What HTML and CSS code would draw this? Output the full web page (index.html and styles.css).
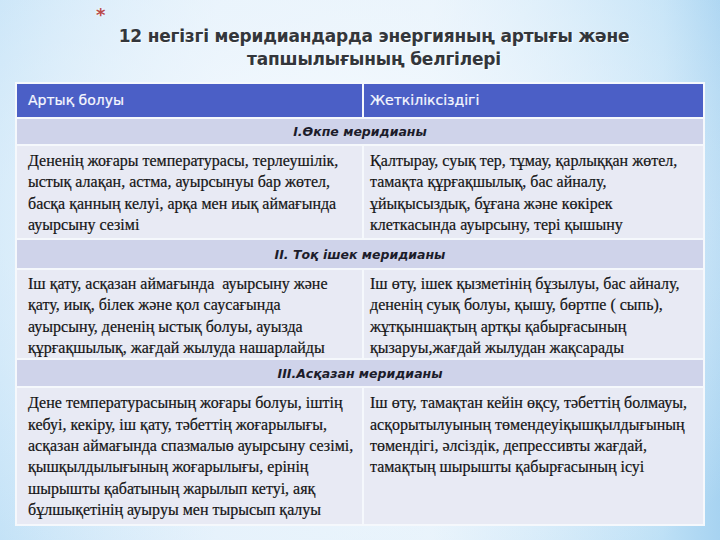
FILE: index.html
```html
<!DOCTYPE html>
<html>
<head>
<meta charset="utf-8">
<link rel="stylesheet" href="styles.css">
</head>
<body>
<div class="slide">
  <div class="title-wrap">
    <span class="star">*</span>
    <h1 class="title">12 негізгі меридиандарда энергияның артығы және<br>тапшылығының белгілері</h1>
  </div>
  <table class="grid">
    <tr class="head">
      <th class="c-left">Артық болуы</th>
      <th class="c-right">Жеткіліксіздігі</th>
    </tr>
    <tr class="section s1"><td colspan="2">І.Өкпе меридианы</td></tr>
    <tr class="data d1">
      <td>Дененің жоғары температурасы, терлеушілік,<br>ыстық алақан, астма, ауырсынуы бар жөтел,<br>басқа қанның келуі, арқа мен иық аймағында<br>ауырсыну сезімі</td>
      <td>Қалтырау, суық тер, тұмау, қарлыққан жөтел,<br>тамақта құрғақшылық, бас айналу,<br>ұйықысыздық, бұғана және көкірек<br>клеткасында ауырсыну, тері қышыну</td>
    </tr>
    <tr class="section s2"><td colspan="2">ІІ. Тоқ ішек меридианы</td></tr>
    <tr class="data d2">
      <td>Іш қату, асқазан аймағында&nbsp; ауырсыну және<br>қату, иық, білек және қол саусағында<br>ауырсыну, дененің ыстық болуы, ауызда<br>құрғақшылық, жағдай жылуда нашарлайды</td>
      <td>Іш өту, ішек қызметінің бұзылуы, бас айналу,<br>дененің суық болуы, қышу, бөртпе ( сыпь),<br>жұтқыншақтың артқы қабырғасының<br>қызаруы,жағдай жылудан жақсарады</td>
    </tr>
    <tr class="section s3"><td colspan="2">ІІІ.Асқазан меридианы</td></tr>
    <tr class="data d3">
      <td>Дене температурасының жоғары болуы, іштің<br>кебуі, кекіру, іш қату, тәбеттің жоғарылығы,<br>асқазан аймағында спазмалыө ауырсыну сезімі,<br>қышқылдылығының жоғарылығы, ерінің<br>шырышты қабатының жарылып кетуі, аяқ<br>бұлшықетінің ауыруы мен тырысып қалуы</td>
      <td>Іш өту, тамақтан кейін өқсу, тәбеттің болмауы,<br>асқорытылуының төмендеуіқышқылдығының<br>төмендігі, әлсіздік, депрессивты жағдай,<br>тамақтың шырышты қабырғасының ісуі</td>
    </tr>
  </table>
</div>
</body>
</html>
```
FILE: styles.css
```css
html, body {
  margin: 0;
  padding: 0;
}
body {
  width: 720px;
  height: 540px;
  overflow: hidden;
  background:
    radial-gradient(ellipse 520px 420px at 330px 220px, rgba(250,253,255,0.95) 0%, rgba(240,247,253,0.7) 45%, rgba(240,247,253,0) 100%),
    linear-gradient(90deg, #c3e2f7 0%, #e2f0fb 30%, #e6f2fb 60%, #bde0f6 92%, #a7d3f1 100%);
}
.slide {
  width: 720px;
  height: 540px;
  display: flex;
  flex-direction: column;
  padding: 0 15px 0 15px;
  box-sizing: border-box;
}
.title-wrap {
  position: relative;
  height: 82px;
  display: flex;
  justify-content: center;
  padding-left: 28px;
  box-sizing: border-box;
}
.star {
  position: absolute;
  left: 81px;
  top: 5px;
  color: #b84a4a;
  font-family: "DejaVu Sans", sans-serif;
  font-size: 18px;
  font-weight: bold;
  line-height: 20px;
  text-shadow: 0 0 3px rgba(255,255,255,0.9);
}
.title {
  margin: 25px 0 0 0;
  font-family: "DejaVu Sans", sans-serif;
  font-weight: bold;
  font-size: 17px;
  line-height: 23px;
  letter-spacing: -0.2px;
  text-align: center;
  color: #33363b;
  text-shadow: 1px 1px 1px rgba(255,255,255,0.8);
}
.grid {
  width: 690px;
  border-collapse: collapse;
  border: 2px solid #f5f8fc;
  table-layout: fixed;
}
.grid td, .grid th {
  border: 2px solid #f5f8fc;
  padding: 0;
}
.head th {
  background: #4b5fc6;
  color: #f6f8ff;
  font-family: "DejaVu Sans", sans-serif;
  font-weight: normal;
  font-size: 14px;
  text-align: left;
  height: 31px;
  padding: 0 0 2px 11px;
  vertical-align: middle;
  -webkit-text-stroke: 0.2px #f6f8ff;
}
.head .c-left {
  width: 334px;
}
.head .c-right {
  padding-left: 6px;
  border-left: 1px solid #c5ccf0;
}
.section td {
  background: #cfd3ea;
  text-align: center;
  font-family: "DejaVu Sans", sans-serif;
  font-style: italic;
  font-weight: bold;
  font-size: 12.5px;
  color: #1c1c2a;
  height: 25px;
  vertical-align: middle;
}
.s2 td { height: 28px; }
.s3 td { height: 26px; }
.data td {
  background: #e8eaf4;
  font-family: "Liberation Serif", serif;
  font-size: 16px;
  line-height: 21.3px;
  color: #141414;
  vertical-align: top;
  padding: 4px 4px 3px 11px;
  border-left: 2px solid #f5f8fc;
  -webkit-text-stroke: 0.2px #141414;
}
.d2 td {
  padding-top: 3px;
  padding-bottom: 0;
}
.data td + td {
  padding-left: 6px;
}
.d3 td {
  height: 129px;
}
```
